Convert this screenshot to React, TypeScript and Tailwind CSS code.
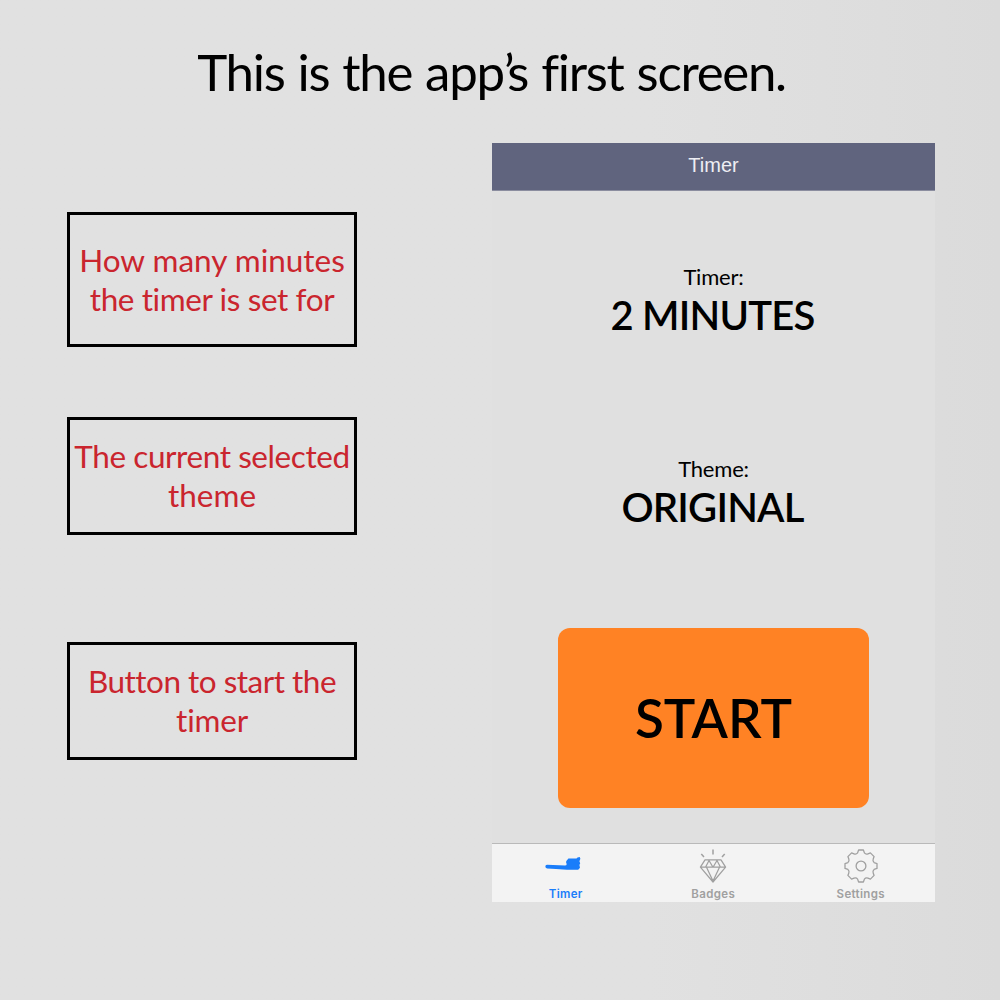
import React from 'react';

type LabelProps = { lines: { text: string; spacing: string }[]; className: string };

function Callout({ lines, className }: LabelProps) {
  return (
    <div
      className={`flex w-[290px] flex-col items-center justify-center border-[3px] border-black text-[31.5px] leading-[39px] text-[#ca252e] ${className}`}
    >
      {lines.map((line) => (
        <span key={line.text} className={`whitespace-nowrap ${line.spacing}`}>
          {line.text}
        </span>
      ))}
    </div>
  );
}

function ToothbrushIcon() {
  return (
    <svg width="36" height="32" viewBox="0 0 36 32" fill="#1a7dfa" className="relative -left-[3px]">
      <path d="M0.6 17.6 Q-0.2 14.8 2 14.8 L20 15.5 Q22.3 15.4 21.4 13.2 Q20.6 11.2 22 10.2 L23.4 8.6 L31.5 8.6 L32.5 7.4 L34.7 7 L35.4 8.8 L34.4 11.2 L35.2 13.2 L34.4 15 L35 17.8 L33.2 19.8 L22 19.8 L11 19 L2 18.6 Z" />
    </svg>
  );
}

function DiamondIcon() {
  return (
    <svg width="28" height="34" viewBox="0 0 28 34" fill="none" stroke="#a0a0a0" strokeWidth="1.25" strokeLinejoin="round">
      <path d="M6 10.8 H22 L26.6 18.2 L14 33 L1.4 18.2 Z M1.4 18.2 H26.6 M6.5 18.2 L10 11.5 L14 18.2 L18 11.5 L21.5 18.2 M7.5 18.2 L14 32 L20.5 18.2" />
      <path d="M14 0.5 V5.5 M2.3 5 L5 8 M25.7 5 L23 8" strokeWidth="1.5" />
    </svg>
  );
}

function GearIcon() {
  return (
    <svg width="34" height="34" viewBox="0 0 34 34" fill="none" stroke="#a0a0a0" strokeWidth="1.3" strokeLinejoin="round">
      <path d="M13.6 3.9 L14.6 1 H19.4 L20.4 3.9 Q21.8 5.6 24 4.8 L26.4 3.9 L30.1 7.6 L29.2 10 Q28.4 12.2 30.1 13.6 L33 14.6 V19.4 L30.1 20.4 Q28.4 21.8 29.2 24 L30.1 26.4 L26.4 30.1 L24 29.2 Q21.8 28.4 20.4 30.1 L19.4 33 H14.6 L13.6 30.1 Q12.2 28.4 10 29.2 L7.6 30.1 L3.9 26.4 L4.8 24 Q5.6 21.8 3.9 20.4 L1 19.4 V14.6 L3.9 13.6 Q5.6 12.2 4.8 10 L3.9 7.6 L7.6 3.9 L10 4.8 Q12.2 5.6 13.6 3.9 Z" />
      <circle cx="17" cy="17" r="4.9" />
    </svg>
  );
}

type TabProps = { label: string; color: string; children: React.ReactNode };

function Tab({ label, color, children }: TabProps) {
  return (
    <div className="flex w-[147.5px] flex-col items-center">
      <div className="flex h-[43px] items-center">{children}</div>
      <span className={`font-['Inter',sans-serif] text-[11.5px] leading-[14px] font-semibold tracking-[0.35px] ${color}`}>
        {label}
      </span>
    </div>
  );
}

export default function App() {
  return (
    <div className="flex h-[1000px] w-[1000px] flex-col bg-linear-to-r from-[#e1e1e1] from-65% to-[#dbdbdb] font-['Lato',sans-serif] text-black [font-variant-ligatures:none]">
      <h1 className="h-[143px] w-[983px] pt-[42px] text-center text-[51px] leading-[60px] tracking-[-1.3px] whitespace-nowrap [word-spacing:1.3px]">
        This is the app<span className="tracking-[-7.3px]">’</span>s first screen.
      </h1>
      <div className="flex">
        <div className="ml-[67px] flex w-[290px] flex-col pt-[69px]">
          <Callout
            className="h-[135px]"
            lines={[
              { text: 'How many minutes', spacing: 'tracking-[0px]' },
              { text: 'the timer is set for', spacing: 'tracking-[-0.4px]' },
            ]}
          />
          <Callout
            className="mt-[70px] h-[118px]"
            lines={[
              { text: 'The current selected', spacing: 'tracking-[-0.42px]' },
              { text: 'theme', spacing: 'tracking-[0px]' },
            ]}
          />
          <Callout
            className="mt-[107px] h-[118px]"
            lines={[
              { text: 'Button to start the', spacing: 'tracking-[-0.5px]' },
              { text: 'timer', spacing: 'tracking-[-0.2px]' },
            ]}
          />
        </div>
        <div className="ml-[135px] flex h-[759px] w-[443px] flex-col bg-[#e0e0e0]">
          <header className="flex h-[48px] justify-center border-b border-[#8b8d9f] bg-[#60647e] pt-[10px] font-['Liberation_Sans',sans-serif] text-[20px] leading-[24px] text-[#eeeef3]">
            Timer
          </header>
          <main className="flex h-[652px] flex-col items-center">
            <div className="mt-[72px] text-[22px] leading-[28px] tracking-[-0.2px] whitespace-nowrap">Timer:</div>
            <div className="pr-[2px] text-[40px] leading-[48px] font-semibold tracking-[-0.8px] whitespace-nowrap">2 MINUTES</div>
            <div className="mt-[116px] text-[22px] leading-[28px] tracking-[-0.2px] whitespace-nowrap">Theme:</div>
            <div className="pr-[2px] text-[40px] leading-[48px] font-semibold tracking-[-0.8px] whitespace-nowrap">ORIGINAL</div>
            <button className="mt-[97px] flex h-[180px] w-[311px] items-center justify-center rounded-[12px] bg-[#ff8224] text-[53px] font-semibold">
              START
            </button>
          </main>
          <nav className="flex h-[59px] border-t border-[#b9b9b9] bg-[#f3f3f3]">
            <Tab label="Timer" color="text-[#1a7dfa]">
              <ToothbrushIcon />
            </Tab>
            <Tab label="Badges" color="text-[#a0a0a0]">
              <DiamondIcon />
            </Tab>
            <Tab label="Settings" color="text-[#a0a0a0]">
              <GearIcon />
            </Tab>
          </nav>
        </div>
      </div>
    </div>
  );
}
